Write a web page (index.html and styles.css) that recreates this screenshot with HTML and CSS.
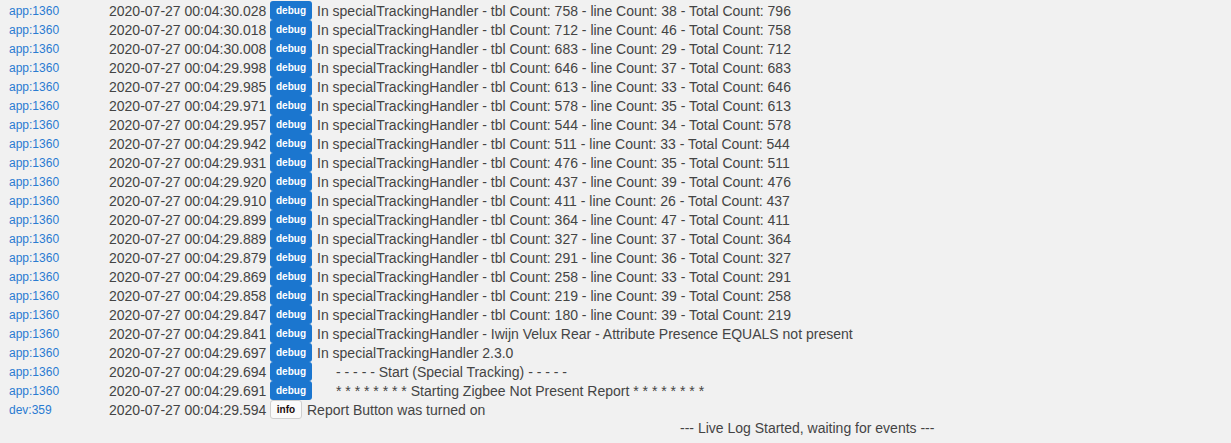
FILE: index.html
```html
<!DOCTYPE html>
<html>
<head>
<meta charset="utf-8">
<link rel="stylesheet" href="styles.css">
</head>
<body>
<div class="log">
  <div class="row"><a class="src">app:1360</a><span class="ts">2020-07-27 00:04:30.028</span><span class="badge debug">debug</span><span class="msg">In specialTrackingHandler - tbl Count: 758 - line Count: 38 - Total Count: 796</span></div>
  <div class="row"><a class="src">app:1360</a><span class="ts">2020-07-27 00:04:30.018</span><span class="badge debug">debug</span><span class="msg">In specialTrackingHandler - tbl Count: 712 - line Count: 46 - Total Count: 758</span></div>
  <div class="row"><a class="src">app:1360</a><span class="ts">2020-07-27 00:04:30.008</span><span class="badge debug">debug</span><span class="msg">In specialTrackingHandler - tbl Count: 683 - line Count: 29 - Total Count: 712</span></div>
  <div class="row"><a class="src">app:1360</a><span class="ts">2020-07-27 00:04:29.998</span><span class="badge debug">debug</span><span class="msg">In specialTrackingHandler - tbl Count: 646 - line Count: 37 - Total Count: 683</span></div>
  <div class="row"><a class="src">app:1360</a><span class="ts">2020-07-27 00:04:29.985</span><span class="badge debug">debug</span><span class="msg">In specialTrackingHandler - tbl Count: 613 - line Count: 33 - Total Count: 646</span></div>
  <div class="row"><a class="src">app:1360</a><span class="ts">2020-07-27 00:04:29.971</span><span class="badge debug">debug</span><span class="msg">In specialTrackingHandler - tbl Count: 578 - line Count: 35 - Total Count: 613</span></div>
  <div class="row"><a class="src">app:1360</a><span class="ts">2020-07-27 00:04:29.957</span><span class="badge debug">debug</span><span class="msg">In specialTrackingHandler - tbl Count: 544 - line Count: 34 - Total Count: 578</span></div>
  <div class="row"><a class="src">app:1360</a><span class="ts">2020-07-27 00:04:29.942</span><span class="badge debug">debug</span><span class="msg">In specialTrackingHandler - tbl Count: 511 - line Count: 33 - Total Count: 544</span></div>
  <div class="row"><a class="src">app:1360</a><span class="ts">2020-07-27 00:04:29.931</span><span class="badge debug">debug</span><span class="msg">In specialTrackingHandler - tbl Count: 476 - line Count: 35 - Total Count: 511</span></div>
  <div class="row"><a class="src">app:1360</a><span class="ts">2020-07-27 00:04:29.920</span><span class="badge debug">debug</span><span class="msg">In specialTrackingHandler - tbl Count: 437 - line Count: 39 - Total Count: 476</span></div>
  <div class="row"><a class="src">app:1360</a><span class="ts">2020-07-27 00:04:29.910</span><span class="badge debug">debug</span><span class="msg">In specialTrackingHandler - tbl Count: 411 - line Count: 26 - Total Count: 437</span></div>
  <div class="row"><a class="src">app:1360</a><span class="ts">2020-07-27 00:04:29.899</span><span class="badge debug">debug</span><span class="msg">In specialTrackingHandler - tbl Count: 364 - line Count: 47 - Total Count: 411</span></div>
  <div class="row"><a class="src">app:1360</a><span class="ts">2020-07-27 00:04:29.889</span><span class="badge debug">debug</span><span class="msg">In specialTrackingHandler - tbl Count: 327 - line Count: 37 - Total Count: 364</span></div>
  <div class="row"><a class="src">app:1360</a><span class="ts">2020-07-27 00:04:29.879</span><span class="badge debug">debug</span><span class="msg">In specialTrackingHandler - tbl Count: 291 - line Count: 36 - Total Count: 327</span></div>
  <div class="row"><a class="src">app:1360</a><span class="ts">2020-07-27 00:04:29.869</span><span class="badge debug">debug</span><span class="msg">In specialTrackingHandler - tbl Count: 258 - line Count: 33 - Total Count: 291</span></div>
  <div class="row"><a class="src">app:1360</a><span class="ts">2020-07-27 00:04:29.858</span><span class="badge debug">debug</span><span class="msg">In specialTrackingHandler - tbl Count: 219 - line Count: 39 - Total Count: 258</span></div>
  <div class="row"><a class="src">app:1360</a><span class="ts">2020-07-27 00:04:29.847</span><span class="badge debug">debug</span><span class="msg">In specialTrackingHandler - tbl Count: 180 - line Count: 39 - Total Count: 219</span></div>
  <div class="row"><a class="src">app:1360</a><span class="ts">2020-07-27 00:04:29.841</span><span class="badge debug">debug</span><span class="msg">In specialTrackingHandler - Iwijn Velux Rear - Attribute Presence EQUALS not present</span></div>
  <div class="row"><a class="src">app:1360</a><span class="ts">2020-07-27 00:04:29.697</span><span class="badge debug">debug</span><span class="msg">In specialTrackingHandler 2.3.0</span></div>
  <div class="row"><a class="src">app:1360</a><span class="ts">2020-07-27 00:04:29.694</span><span class="badge debug">debug</span><span class="msg indent">- - - - - Start (Special Tracking) - - - - -</span></div>
  <div class="row"><a class="src">app:1360</a><span class="ts">2020-07-27 00:04:29.691</span><span class="badge debug">debug</span><span class="msg indent">* * * * * * * * Starting Zigbee Not Present Report * * * * * * * *</span></div>
  <div class="row"><a class="src">dev:359</a><span class="ts">2020-07-27 00:04:29.594</span><span class="badge info">info</span><span class="msg">Report Button was turned on</span></div>
  <div class="started">--- Live Log Started, waiting for events ---</div>
</div>
</body>
</html>
```

FILE: styles.css
```css
html, body {
  margin: 0;
  padding: 0;
  background: #f1f1f1;
}
body {
  font-family: "Liberation Sans", Arial, sans-serif;
  color: #444;
  width: 1231px;
  height: 443px;
  overflow: hidden;
}
.log {
  padding-top: 1px;
}
.row {
  display: flex;
  align-items: center;
  height: 19px;
  white-space: nowrap;
}
.src {
  width: 100px;
  padding-left: 9px;
  font-size: 12px;
  color: #2a7bd1;
  text-decoration: none;
}
.ts {
  width: 161px;
  font-size: 14px;
  color: #444;
}
.badge {
  box-sizing: border-box;
  height: 19px;
  line-height: 19px;
  font-size: 10px;
  font-weight: bold;
  border-radius: 3px;
  text-align: center;
}
.debug {
  width: 42px;
  background: #1b76cf;
  color: #fff;
}
.info {
  width: 32px;
  line-height: 17px;
  background: #fafafa;
  border: 1px solid #cfcfcf;
  color: #1a0a0a;
}
.msg {
  margin-left: 5px;
  font-size: 14px;
  color: #444;
}
.msg.indent {
  padding-left: 19px;
}
.started {
  height: 19px;
  line-height: 19px;
  padding-left: 680px;
  font-size: 14px;
  color: #444;
}
```
